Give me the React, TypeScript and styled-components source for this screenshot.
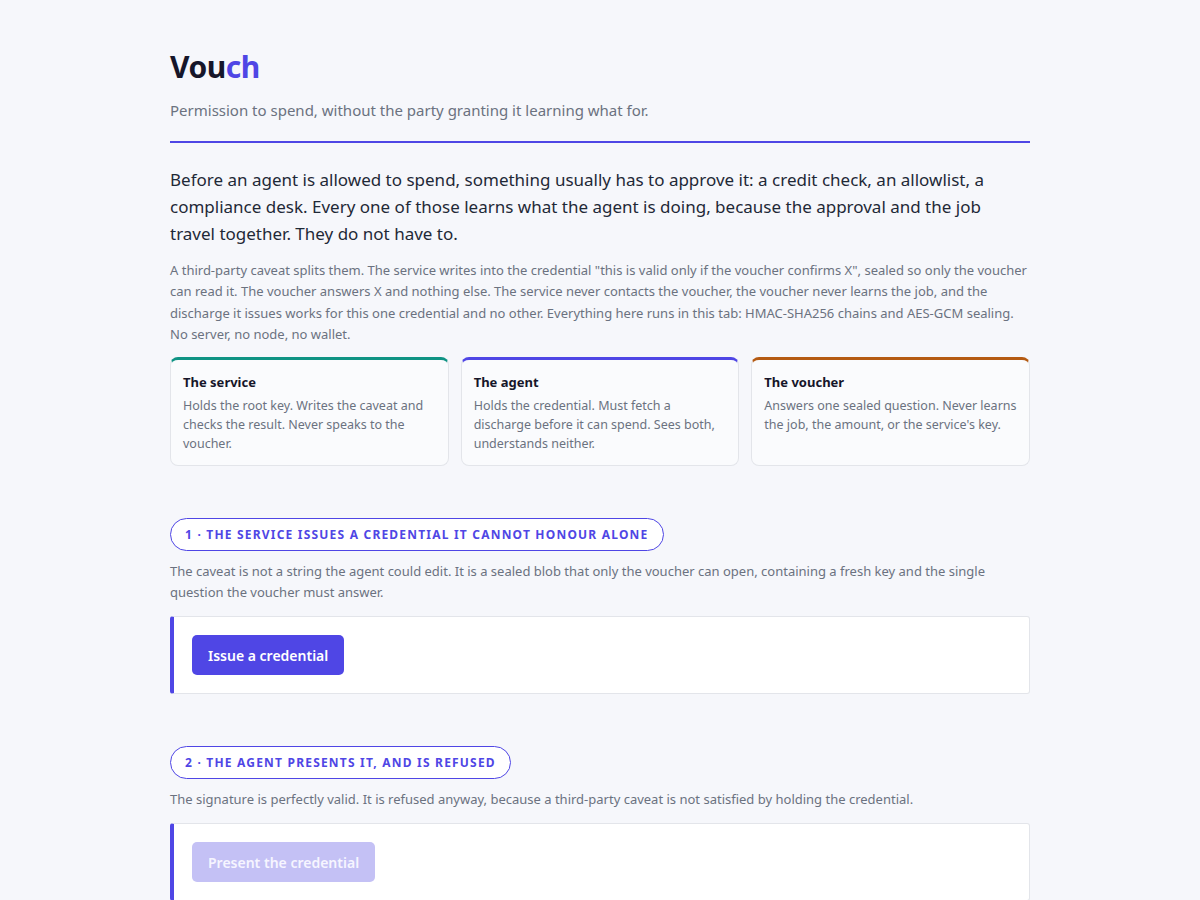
import React from 'react';
import styled, { createGlobalStyle } from 'styled-components';

const GlobalStyle = createGlobalStyle`
	html, body {
		margin: 0;
		padding: 0;
		background: #f6f7fb;
	}
	body {
		font-family: 'Noto Sans', 'Open Sans', sans-serif;
		color: #1f2937;
	}
`;

const SPage = styled.main`
	width: 860px;
	margin: 0 auto;
	padding: 44px 0 60px;
`;

const SHeader = styled.header`
	border-bottom: 2px solid #4f46e5;
	padding-bottom: 20px;
`;

const STitle = styled.h1`
	margin: 0;
	font-size: 30px;
	line-height: 46px;
	font-weight: 700;
	color: #16162a;
	letter-spacing: -0.5px;
`;

const SAccent = styled.span`
	color: #4f46e5;
`;

const STagline = styled.p`
	margin: 9px 0 0;
	font-size: 15px;
	line-height: 22px;
	color: #6b7280;
`;

const SLead = styled.p`
	margin: 23px 0 0;
	font-size: 17px;
	line-height: 27px;
	color: #1f2937;
`;

const SBody = styled.p`
	margin: 13px 0 0;
	font-size: 13px;
	line-height: 21.3px;
	color: #6b7280;
`;

const SCards = styled.div`
	display: grid;
	grid-template-columns: repeat(3, 1fr);
	gap: 12px;
	margin-top: 12px;
`;

const SCard = styled.div<{ $accent: string }>`
	background: #fafbfd;
	border: 1px solid #e3e5ea;
	border-top: 3px solid ${({ $accent }) => $accent};
	border-radius: 8px;
	padding: 13px 12px 12px;
	min-height: 78px;
`;

const SCardTitle = styled.div`
	font-size: 13px;
	font-weight: 700;
	line-height: 18px;
	color: #16162a;
`;

const SCardText = styled.div`
	margin-top: 6px;
	font-size: 12.5px;
	line-height: 18.7px;
	color: #6b7280;
`;

const SSection = styled.section`
	margin-top: 52px;
`;

const SPill = styled.h2`
	display: inline-block;
	margin: 0;
	padding: 0 14px;
	height: 33px;
	line-height: 31px;
	box-sizing: border-box;
	border: 1px solid #4f46e5;
	border-radius: 999px;
	background: #ffffff;
	font-size: 12px;
	font-weight: 700;
	letter-spacing: 1.2px;
	text-transform: uppercase;
	color: #4f46e5;
`;

const SStepText = styled.p`
	margin: 10px 0 0;
	font-size: 13px;
	line-height: 21px;
	color: #6b7280;
`;

const SPanel = styled.div`
	margin-top: 13px;
	background: #ffffff;
	border: 1px solid #e3e5ea;
	border-left: 4px solid #4f46e5;
	border-radius: 3px;
	padding: 18px 18px;
`;

const SButton = styled.button<{ $disabled?: boolean }>`
	height: 40px;
	padding: 0 16px;
	border: none;
	border-radius: 5px;
	background: ${({ $disabled }) => ($disabled ? '#c4c1f5' : '#4f46e5')};
	color: ${({ $disabled }) => ($disabled ? '#f6f5ff' : '#ffffff')};
	font-family: inherit;
	font-size: 14px;
	font-weight: 600;
	cursor: ${({ $disabled }) => ($disabled ? 'default' : 'pointer')};
`;

const cards = [
	{
		accent: '#0f9384',
		title: 'The service',
		text: 'Holds the root key. Writes the caveat and checks the result. Never speaks to the voucher.',
	},
	{
		accent: '#4f46e5',
		title: 'The agent',
		text: 'Holds the credential. Must fetch a discharge before it can spend. Sees both, understands neither.',
	},
	{
		accent: '#b45a12',
		title: 'The voucher',
		text: "Answers one sealed question. Never learns the job, the amount, or the service's key.",
	},
];

const steps = [
	{
		label: '1 · The service issues a credential it cannot honour alone',
		text: 'The caveat is not a string the agent could edit. It is a sealed blob that only the voucher can open, containing a fresh key and the single question the voucher must answer.',
		button: 'Issue a credential',
		disabled: false,
	},
	{
		label: '2 · The agent presents it, and is refused',
		text: 'The signature is perfectly valid. It is refused anyway, because a third-party caveat is not satisfied by holding the credential.',
		button: 'Present the credential',
		disabled: true,
	},
];

export default function App(): React.ReactElement {
	return (
		<>
			<GlobalStyle />
			<SPage>
				<SHeader>
					<STitle>
						Vou<SAccent>ch</SAccent>
					</STitle>
					<STagline>Permission to spend, without the party granting it learning what for.</STagline>
				</SHeader>
				<SLead>
					Before an agent is allowed to spend, something usually has to approve it: a credit check, an
					allowlist, a compliance desk. Every one of those learns what the agent is doing, because the
					approval and the job travel together. They do not have to.
				</SLead>
				<SBody>
					A third-party caveat splits them. The service writes into the credential "this is valid only if
					the voucher confirms X", sealed so only the voucher can read it. The voucher answers X and nothing
					else. The service never contacts the voucher, the voucher never learns the job, and the discharge
					it issues works for this one credential and no other. Everything here runs in this tab:
					HMAC-SHA256 chains and AES-GCM sealing. No server, no node, no wallet.
				</SBody>
				<SCards>
					{cards.map((c) => (
						<SCard key={c.title} $accent={c.accent}>
							<SCardTitle>{c.title}</SCardTitle>
							<SCardText>{c.text}</SCardText>
						</SCard>
					))}
				</SCards>
				{steps.map((s) => (
					<SSection key={s.label}>
						<SPill>{s.label}</SPill>
						<SStepText>{s.text}</SStepText>
						<SPanel>
							<SButton $disabled={s.disabled} disabled={s.disabled}>
								{s.button}
							</SButton>
						</SPanel>
					</SSection>
				))}
			</SPage>
		</>
	);
}
